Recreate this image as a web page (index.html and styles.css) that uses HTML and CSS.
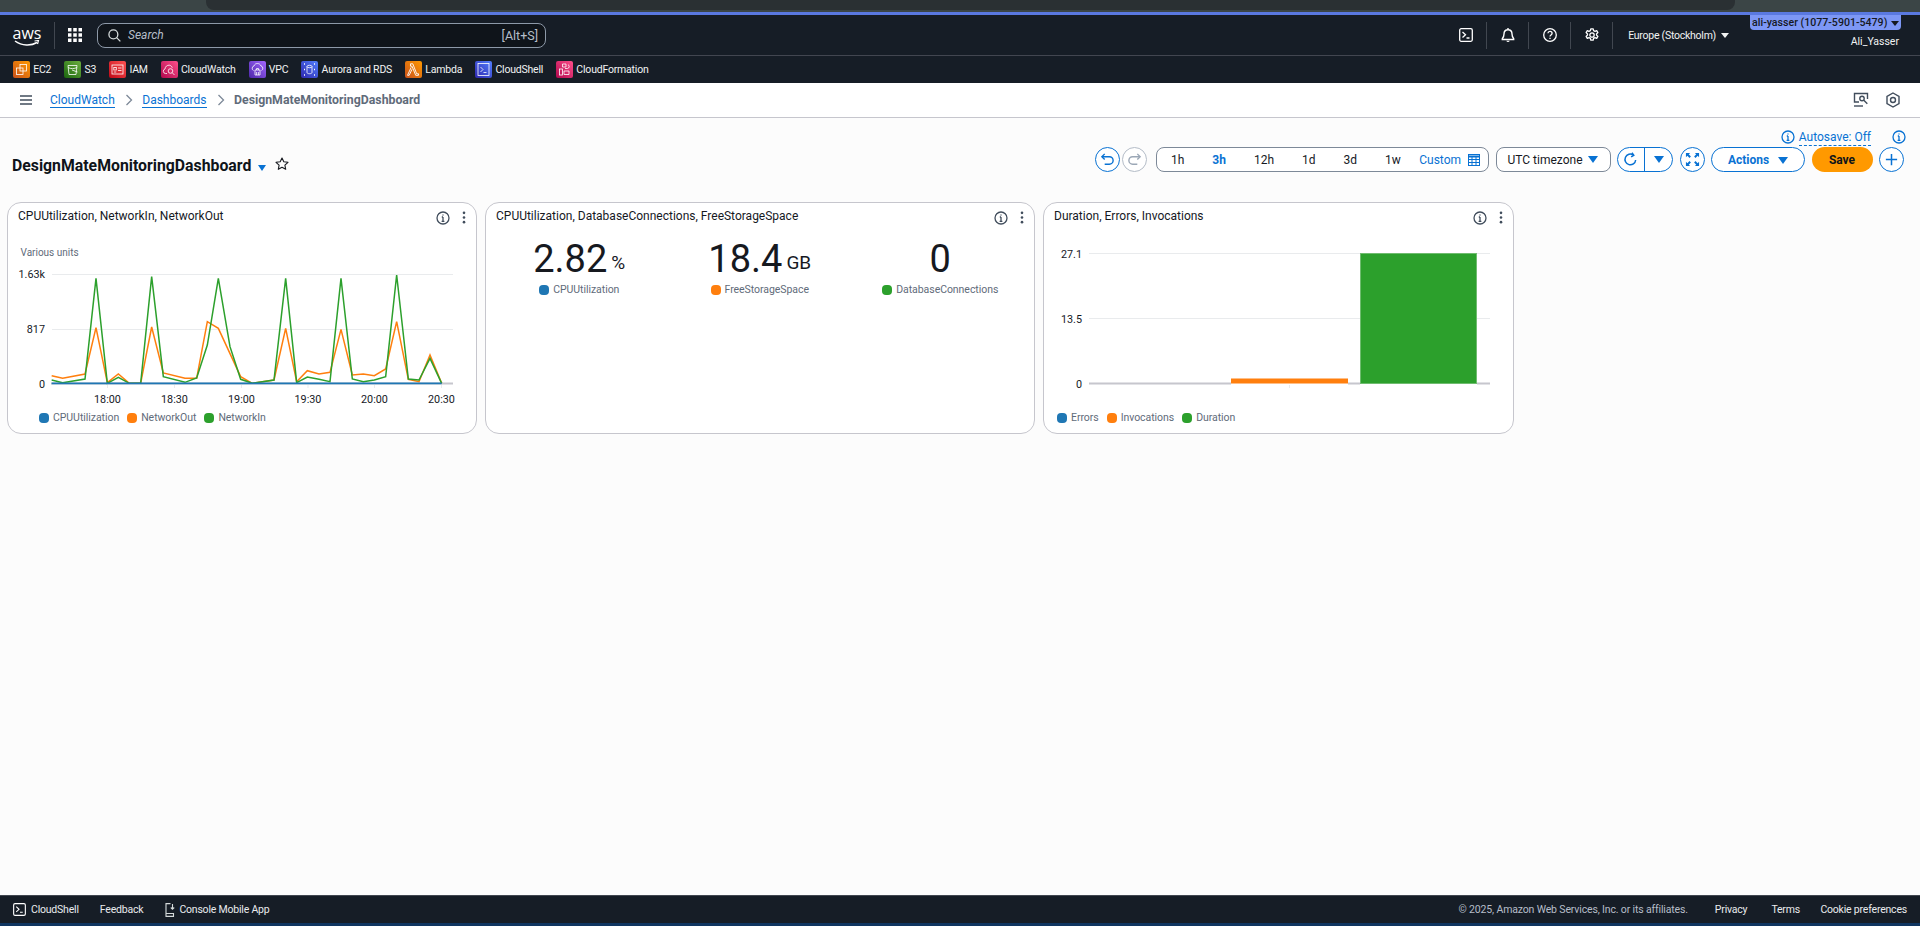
FILE: index.html
```html
<!DOCTYPE html>
<html lang="en">
<head>
    <meta charset="UTF-8">
    <meta name="viewport" content="width=device-width, initial-scale=1.0">
    <title>DesignMateMonitoringDashboard | CloudWatch</title>
    <link rel="stylesheet" href="styles.css">
</head>
<body>
    <div class="browser-strip"><div class="browser-tab"></div></div>
    <div class="accent-line"></div>

    <!-- top navigation -->
    <header class="top-nav">
        <div class="aws-logo">
            <span class="aws-word">aws</span>
            <svg class="aws-smile" viewBox="0 0 26 7"><path d="M1 1c7 5 16 5 22 1.500" fill="none" stroke="#fff" stroke-width="1.500"/><path d="M20.500 1l4-.5-1 3.500" fill="none" stroke="#fff" stroke-width="1.200"/></svg>
        </div>
        <span class="nav-divider divider-logo"></span>
        <svg class="apps-icon" viewBox="0 0 14 14" fill="#fff"><rect width="3.500" height="3.500"/><rect x="5.250" width="3.500" height="3.500"/><rect x="10.500" width="3.500" height="3.500"/><rect y="5.250" width="3.500" height="3.500"/><rect x="5.250" y="5.250" width="3.500" height="3.500"/><rect x="10.500" y="5.250" width="3.500" height="3.500"/><rect y="10.500" width="3.500" height="3.500"/><rect x="5.250" y="10.500" width="3.500" height="3.500"/><rect x="10.500" y="10.500" width="3.500" height="3.500"/></svg>
        <div class="search-box">
            <svg class="search-icon" viewBox="0 0 14 14" fill="none" stroke="#d5dbdb" stroke-width="1.400"><circle cx="5.800" cy="5.800" r="4.800"/><path d="M9.300 9.300l4 4"/></svg>
            <span class="search-text">Search</span>
            <span class="search-key">[Alt+S]</span>
        </div>
        <div class="nav-right">
            <svg class="nav-icon" viewBox="0 0 14 14" fill="none" stroke="#fff" stroke-width="1.300"><rect x=".7" y=".7" width="12.600" height="12.600" rx="1.500"/><path d="M3.500 4l3 2.800-3 2.800M7.500 10h3"/></svg>
            <span class="nav-divider"></span>
            <svg class="nav-icon" viewBox="0 0 14 14" fill="none" stroke="#fff" stroke-width="1.400"><path d="M7 1.800c2.600 0 4 1.800 4 4.200 0 2.500.6 3.500 1.700 4.700v.8H1.300v-.8C2.400 9.500 3 8.500 3 6c0-2.400 1.400-4.200 4-4.200zM7 0v1.800"/><path d="M5.300 12.700h3.400A1.800 1.800 0 0 1 7 14a1.800 1.800 0 0 1-1.700-1.300z" fill="#fff" stroke="none"/></svg>
            <span class="nav-divider"></span>
            <svg class="nav-icon" viewBox="0 0 14 14" fill="none" stroke="#fff" stroke-width="1.300"><circle cx="7" cy="7" r="6.300"/><path d="M4.900 5.300C5 4 5.900 3.400 7 3.400c1.200 0 2.100.8 2.100 1.900 0 1.700-2.100 1.700-2.100 3.300"/><path d="M7 9.700v1.300"/></svg>
            <span class="nav-divider"></span>
            <svg class="nav-icon" viewBox="0 0 14 14" fill="none" stroke="#fff" stroke-width="1.300"><circle cx="7" cy="7" r="2.200"/><path d="M5.800.8h2.400l.4 1.800 1.400.7 1.700-.7 1.200 2-1.400 1.300v1.200l1.400 1.300-1.200 2-1.700-.7-1.400.7-.4 1.800H5.800l-.4-1.800-1.400-.7-1.700.7-1.200-2 1.400-1.300V5.900L1.100 4.600l1.200-2 1.700.7 1.400-.7z" stroke-linejoin="round"/></svg>
            <span class="nav-divider"></span>
            <span class="region">Europe (Stockholm)</span>
            <span class="caret caret-white"></span>
            <div class="account">
                <span class="account-tag">ali-yasser (1077-5901-5479) <span class="caret caret-dark"></span></span>
                <span class="account-user">Ali_Yasser</span>
            </div>
        </div>
    </header>

    <!-- pinned services -->
    <nav class="service-bar">
        <a class="service"><svg class="service-icon ic-orange" viewBox="0 0 17 17" fill="none" stroke="#fff" stroke-width=".8"><rect x="7" y="3.500" width="6.500" height="6.500"/><rect x="3.500" y="7" width="6.500" height="6.500"/></svg>EC2</a>
        <a class="service"><svg class="service-icon ic-green" viewBox="0 0 17 17" fill="none" stroke="#fff" stroke-width=".8"><path d="M4 4.500h9l-1 9H5z"/><path d="M4 6.500c3 1.500 6 1.500 9 0M8 9l5.500 2"/></svg>S3</a>
        <a class="service"><svg class="service-icon ic-red" viewBox="0 0 17 17" fill="none" stroke="#fff" stroke-width=".8"><rect x="3" y="4" width="11" height="9"/><rect x="4.800" y="6.500" width="2.500" height="2.500"/><path d="M9 7h3.500M9 9.500h3.500M4.800 11h2.500"/></svg>IAM</a>
        <a class="service"><svg class="service-icon ic-pink" viewBox="0 0 17 17" fill="none" stroke="#fff" stroke-width=".8"><path d="M6 12.500H4.500a2.300 2.300 0 0 1-.5-4.500c.2-2.500 2.200-4 4.300-3.800 1.500.2 2.500 1.200 3 2.500"/><circle cx="9.500" cy="10" r="2.300"/><path d="M11.200 11.700l2.300 2.300"/></svg>CloudWatch</a>
        <a class="service"><svg class="service-icon ic-purple" viewBox="0 0 17 17" fill="none" stroke="#fff" stroke-width=".8"><path d="M4.500 9.500A2.400 2.400 0 0 1 5 5c.5-1.800 2-2.500 3.500-2.500S11.600 3.500 12 5a2.400 2.400 0 0 1 .5 4.500"/><path d="M6 14V9h5v5zM7.500 9V7.500h2V9M7.600 14V11M9.400 14V11"/></svg>VPC</a>
        <a class="service"><svg class="service-icon ic-blue" viewBox="0 0 17 17" fill="none" stroke="#fff" stroke-width=".8"><ellipse cx="8.500" cy="5.500" rx="2.500" ry="1.200"/><path d="M6 5.500v6c0 .7 1.100 1.200 2.500 1.200s2.500-.5 2.500-1.200v-6"/><path d="M3 3h1M13 3h1M3 14h1M13 14h1M3 8.500h1M13 8.500h1" stroke-width="1.500"/></svg>Aurora and RDS</a>
        <a class="service"><svg class="service-icon ic-orange" viewBox="0 0 17 17" fill="none" stroke="#fff" stroke-width=".9"><path d="M5.500 2.800h2.300l3.900 10h1.800v1.500h-2.800L7 5.200H5.500zM7 8.300l-2.800 6h-1.700l3.700-8"/></svg>Lambda</a>
        <a class="service"><svg class="service-icon ic-blue" viewBox="0 0 17 17" fill="none" stroke="#fff" stroke-width=".8"><rect x="3" y="2.500" width="11" height="12"/><path d="M5.500 6l2.500 2.500L5.500 11M8.500 11.500h3"/></svg>CloudShell</a>
        <a class="service"><svg class="service-icon ic-pink" viewBox="0 0 17 17" fill="none" stroke="#fff" stroke-width=".8"><rect x="3.500" y="8" width="3" height="6"/><path d="M6.500 3h3.500v3h-3.500zM9 7.500h2.500a2 2 0 0 0 .5-3.800"/><path d="M8 10h5v3.500H8z"/></svg>CloudFormation</a>
    </nav>

    <!-- breadcrumbs -->
    <div class="crumbs">
        <svg class="menu-icon" viewBox="0 0 12 10" stroke="#414d5c" stroke-width="1.500"><path d="M0 1h12M0 5h12M0 9h12"/></svg>
        <a class="crumb-link">CloudWatch</a>
        <svg class="crumb-sep" viewBox="0 0 8 12" fill="none" stroke="#7d8998" stroke-width="1.300"><path d="M1.500 1l5 5-5 5"/></svg>
        <a class="crumb-link">Dashboards</a>
        <svg class="crumb-sep" viewBox="0 0 8 12" fill="none" stroke="#7d8998" stroke-width="1.300"><path d="M1.500 1l5 5-5 5"/></svg>
        <span class="crumb-current">DesignMateMonitoringDashboard</span>
        <div class="crumb-tools">
            <svg class="crumb-tool" viewBox="0 0 16 16" fill="none" stroke="#414d5c" stroke-width="1.400"><path d="M6 10H1.500V1.500h13V7"/><path d="M1 14h9"/><circle cx="9" cy="6.500" r="2.200"/><path d="M10.800 8.300l3.500 3.500"/></svg>
            <svg class="crumb-tool" viewBox="0 0 16 16" fill="none" stroke="#414d5c" stroke-width="1.400"><path d="M8 1l6 3.500v7L8 15l-6-3.500v-7z"/><circle cx="8" cy="8" r="2.500"/></svg>
        </div>
    </div>

    <main class="dash">
        <div class="autosave-row">
            <svg class="info-blue" viewBox="0 0 14 14" fill="none" stroke="#0972d3" stroke-width="1.300"><circle cx="7" cy="7" r="6"/><path d="M7 6v4.300M5.600 10.300h2.800M5.800 6H7M7 3.400v1.200"/></svg>
            <a class="autosave">Autosave: Off</a>
            <svg class="info-blue info-last" viewBox="0 0 14 14" fill="none" stroke="#0972d3" stroke-width="1.300"><circle cx="7" cy="7" r="6"/><path d="M7 6v4.300M5.600 10.300h2.800M5.800 6H7M7 3.400v1.200"/></svg>
        </div>

        <div class="toolbar">
            <div class="dash-title">
                <h1>DesignMateMonitoringDashboard</h1>
                <span class="caret caret-blue"></span>
                <svg class="star" viewBox="0 0 14 14" fill="none" stroke="#16191f" stroke-width="1.100"><path d="M7 1l1.800 3.800 4.200.5-3.100 2.900.8 4.100L7 10.300l-3.700 2 .8-4.100L1 5.300l4.200-.5z" stroke-linejoin="round"/></svg>
            </div>
            <div class="tools">
                <button class="round-btn"><svg viewBox="0 0 16 16" fill="none" stroke="#0972d3" stroke-width="1.500"><path d="M5 2L2 5l3 3"/><path d="M2.500 5H10a3.800 3.800 0 0 1 0 8H5"/></svg></button>
                <button class="round-btn round-off"><svg viewBox="0 0 16 16" fill="none" stroke="#9ba7b6" stroke-width="1.500"><path d="M11 2l3 3-3 3"/><path d="M13.500 5H6a3.800 3.800 0 0 0 0 8h5"/></svg></button>
                <div class="range-box">
                    <span class="range">1h</span>
                    <span class="range range-on">3h</span>
                    <span class="range">12h</span>
                    <span class="range">1d</span>
                    <span class="range">3d</span>
                    <span class="range">1w</span>
                    <a class="custom">Custom</a>
                    <svg class="calendar" viewBox="0 0 12 12" fill="none" stroke="#0972d3"><rect x=".5" y=".5" width="11" height="11"/><path d="M.5 2.500h11" stroke-width="2"/><path d="M4 3v8.500M8 3v8.500M.5 5.500h11M.5 8.500h11"/></svg>
                </div>
                <div class="tz-select">UTC timezone <span class="caret caret-blue caret-big"></span></div>
                <div class="split-btn">
                    <span class="split-main"><svg viewBox="0 0 16 16" fill="none" stroke="#0972d3" stroke-width="1.600"><path d="M13.500 8.500A5.700 5.700 0 1 1 11 3.200"/><path d="M9.500.8l2 2.600-2.800 1.800"/></svg></span>
                    <span class="split-caret"><span class="caret caret-blue caret-big"></span></span>
                </div>
                <button class="round-btn"><svg viewBox="0 0 16 16" fill="#0972d3"><path d="M1 1h4.500L4 2.500 6.300 4.800 4.800 6.300 2.500 4 1 5.500zM15 1v4.500L13.500 4l-2.300 2.300-1.500-1.500L12 2.500 10.500 1zM1 15v-4.500L2.500 12l2.300-2.300 1.500 1.500L4 13.500 5.500 15zM15 15h-4.500l1.500-1.500-2.300-2.300 1.500-1.500 2.300 2.300 1.500-1.500z"/></svg></button>
                <button class="pill-btn">Actions <span class="caret caret-blue caret-big"></span></button>
                <button class="save-btn">Save</button>
                <button class="round-btn"><svg viewBox="0 0 16 16" stroke="#0972d3" stroke-width="1.600"><path d="M8 2v12M2 8h12"/></svg></button>
            </div>
        </div>

        <section class="cards">
            <article class="card">
                <div class="card-head">
                    <h2>CPUUtilization, NetworkIn, NetworkOut</h2>
                    <svg class="card-info" viewBox="0 0 14 14" fill="none" stroke="#414d5c" stroke-width="1.300"><circle cx="7" cy="7" r="6"/><path d="M7 6v4.300M5.600 10.300h2.800M5.800 6H7M7 3.400v1.200"/></svg>
                    <svg class="card-more" viewBox="0 0 4 14" fill="#414d5c"><circle cx="2" cy="2" r="1.400"/><circle cx="2" cy="7" r="1.400"/><circle cx="2" cy="12" r="1.400"/></svg>
                </div>
                <svg class="chart" width="468" height="170" viewBox="8 236 468 170">
                    <text class="units" x="20.500" y="255.500">Various units</text>
                    <path class="grid-line" d="M52 274.500H453M52 329.500H453"/>
                    <path class="grid-line" d="M107.500 385v3M174.500 385v3M241.500 385v3M308 385v3M374.500 385v3M441.500 385v3"/>
                    <path class="axis-line" d="M51 383.500H453"/>
                    <text class="axis-y" x="45" y="277.500">1.63k</text>
                    <text class="axis-y" x="45" y="332.500">817</text>
                    <text class="axis-y" x="45" y="387.500">0</text>
                    <text class="axis-x" x="107.500" y="403">18:00</text>
                    <text class="axis-x" x="174.500" y="403">18:30</text>
                    <text class="axis-x" x="241.500" y="403">19:00</text>
                    <text class="axis-x" x="308" y="403">19:30</text>
                    <text class="axis-x" x="374.500" y="403">20:00</text>
                    <text class="axis-x" x="441.500" y="403">20:30</text>
                    <g transform="translate(0 195) scale(.33333)">
                        <polyline class="series s-orange" points="155,542 188,550 255,537 288,398 322,563 355,537 388,565 422,565 455,396 490,534 555,550 590,550 622,380 655,400 722,545 757,565 822,555 857,400 890,560 922,527 957,537 990,532 1023,403 1057,540 1090,537 1123,542 1157,522 1190,380 1225,553 1257,560 1290,480 1325,565"/>
                        <polyline class="series s-green" points="155,555 188,563 255,552 288,250 322,565 355,547 388,565 422,565 455,245 490,545 555,562 590,549 622,450 655,250 690,455 722,553 757,565 822,555 857,250 890,563 922,546 957,553 990,560 1023,250 1057,552 1090,560 1123,555 1157,545 1190,240 1225,552 1257,555 1290,490 1325,565"/>
                        <polyline class="series s-blue" points="155,565 1325,565"/>
                    </g>
                </svg>
                <div class="legend legend-cpu">
                    <span class="legend-item"><i class="dot dot-blue"></i>CPUUtilization</span>
                    <span class="legend-item"><i class="dot dot-orange"></i>NetworkOut</span>
                    <span class="legend-item"><i class="dot dot-green"></i>NetworkIn</span>
                </div>
            </article>

            <article class="card">
                <div class="card-head">
                    <h2>CPUUtilization, DatabaseConnections, FreeStorageSpace</h2>
                    <svg class="card-info" viewBox="0 0 14 14" fill="none" stroke="#414d5c" stroke-width="1.300"><circle cx="7" cy="7" r="6"/><path d="M7 6v4.300M5.600 10.300h2.800M5.800 6H7M7 3.400v1.200"/></svg>
                    <svg class="card-more" viewBox="0 0 4 14" fill="#414d5c"><circle cx="2" cy="2" r="1.400"/><circle cx="2" cy="7" r="1.400"/><circle cx="2" cy="12" r="1.400"/></svg>
                </div>
                <div class="metrics">
                    <div class="metric">
                        <div class="metric-value">2.82<small>%</small></div>
                        <span class="legend-item"><i class="dot dot-blue"></i>CPUUtilization</span>
                    </div>
                    <div class="metric">
                        <div class="metric-value">18.4<small>GB</small></div>
                        <span class="legend-item"><i class="dot dot-orange"></i>FreeStorageSpace</span>
                    </div>
                    <div class="metric">
                        <div class="metric-value">0</div>
                        <span class="legend-item"><i class="dot dot-green"></i>DatabaseConnections</span>
                    </div>
                </div>
            </article>

            <article class="card">
                <div class="card-head">
                    <h2>Duration, Errors, Invocations</h2>
                    <svg class="card-info" viewBox="0 0 14 14" fill="none" stroke="#414d5c" stroke-width="1.300"><circle cx="7" cy="7" r="6"/><path d="M7 6v4.300M5.600 10.300h2.800M5.800 6H7M7 3.400v1.200"/></svg>
                    <svg class="card-more" viewBox="0 0 4 14" fill="#414d5c"><circle cx="2" cy="2" r="1.400"/><circle cx="2" cy="7" r="1.400"/><circle cx="2" cy="12" r="1.400"/></svg>
                </div>
                <svg class="chart" width="469" height="170" viewBox="1044 236 469 170">
                    <path class="grid-line" d="M1089 253.500H1490M1089 318.500H1490M1289.500 385v3"/>
                    <rect class="bar-orange" x="1231" y="378.500" width="117" height="5"/>
                    <rect class="bar-green" x="1360.500" y="253.500" width="116" height="130"/>
                    <path class="axis-line" d="M1089 383.500H1231M1348 383.500H1360M1477 383.500H1490"/>
                    <text class="axis-y" x="1082" y="257.500">27.1</text>
                    <text class="axis-y" x="1082" y="322.500">13.5</text>
                    <text class="axis-y" x="1082" y="387.500">0</text>
                </svg>
                <div class="legend legend-lambda">
                    <span class="legend-item"><i class="dot dot-blue"></i>Errors</span>
                    <span class="legend-item"><i class="dot dot-orange"></i>Invocations</span>
                    <span class="legend-item"><i class="dot dot-green"></i>Duration</span>
                </div>
            </article>
        </section>
    </main>

    <footer class="footer">
        <svg class="foot-icon" viewBox="0 0 14 14" fill="none" stroke="#fff" stroke-width="1.200"><rect x=".7" y=".7" width="12.600" height="12.600" rx="1.500"/><path d="M3.500 4l3 2.800-3 2.800M7.500 10h3"/></svg>
        <a class="foot-link foot-shell">CloudShell</a>
        <a class="foot-link foot-feedback">Feedback</a>
        <svg class="foot-phone" viewBox="0 0 11 14" fill="none" stroke="#d5dbdb" stroke-width="1.100"><path d="M5.500.6H1v12.800h7.500V10M1 10.500h7.500M7.500 1v5M5.800 4.500l1.700 1.800 1.700-1.800"/></svg>
        <a class="foot-link">Console Mobile App</a>
        <span class="copyright">© 2025, Amazon Web Services, Inc. or its affiliates.</span>
        <a class="foot-link foot-privacy">Privacy</a>
        <a class="foot-link foot-terms">Terms</a>
        <a class="foot-link foot-cookie">Cookie preferences</a>
    </footer>
    <div class="bottom-line"></div>
</body>
</html>
```

FILE: styles.css
```css
* {
    box-sizing: border-box;
}

body {
    margin: 0;
    height: 926px;
    overflow: hidden;
    display: flex;
    flex-direction: column;
    font-family: Roboto, "Noto Sans", Arial, sans-serif;
    font-size: 12px;
    color: #16191f;
    background-color: #fcfcfc;
}

a {
    text-decoration: none;
}

svg {
    display: block;
    flex: none;
}

/* browser chrome remains at the top */
.browser-strip {
    height: 12px;
    flex: none;
    padding: 0 185px 0 206px;
    background-color: #3b4546;
}

.browser-tab {
    height: 10px;
    background-color: #2a3033;
    border-radius: 0 0 8px 8px;
}

.accent-line {
    height: 3px;
    flex: none;
    background-color: #5a79e0;
}

/* top nav */
.top-nav {
    height: 41px;
    flex: none;
    display: flex;
    align-items: center;
    padding-left: 14px;
    background-color: #161d26;
    border-bottom: 1px solid #424650;
    color: #fff;
}

.aws-logo {
    width: 26px;
    display: flex;
    flex-direction: column;
    align-items: center;
    margin-top: 3px;
}

.aws-word {
    font-family: "Open Sans", sans-serif;
    font-size: 16px;
    line-height: 12px;
    color: #fff;
}

.aws-smile {
    width: 26px;
    height: 7px;
    margin-top: 1px;
}

.nav-divider {
    width: 1px;
    height: 27px;
    background-color: #414750;
    flex: none;
}

.divider-logo {
    margin-left: 14px;
    margin-right: 13px;
}

.apps-icon {
    width: 14px;
    height: 14px;
    margin-right: 15px;
}

.search-box {
    width: 449px;
    height: 25px;
    display: flex;
    align-items: center;
    padding: 0 7px 0 10px;
    background-color: #0f141a;
    border: 1px solid #8d99a8;
    border-radius: 8px;
}

.search-icon {
    width: 13px;
    height: 13px;
    margin-right: 7px;
}

.search-text {
    font-style: italic;
    font-size: 12px;
    color: #b6bec9;
}

.search-key {
    margin-left: auto;
    font-size: 12.500px;
    color: #b6bec9;
}

.nav-right {
    margin-left: auto;
    display: flex;
    align-items: center;
    height: 100%;
}

.nav-icon {
    width: 14px;
    height: 14px;
    margin: 0 13.500px;
}

.region {
    margin-left: 15px;
    font-size: 10.500px;
    letter-spacing: -.25px;
    color: #f2f3f3;
    white-space: nowrap;
}

.caret {
    display: inline-block;
    width: 0;
    height: 0;
    flex: none;
    border-style: solid;
    border-color: transparent;
    border-width: 5px 4px 0;
}

.caret-white {
    border-top-color: #f2f3f3;
    margin-left: 5px;
}

.caret-dark {
    border-top-color: #16191f;
    margin-left: 1px;
}

.caret-blue {
    border-top-color: #0972d3;
}

.caret-big {
    border-width: 7px 5px 0;
}

.account {
    width: 151px;
    flex: none;
    height: 100%;
    margin: 0 19px 0 21px;
    display: flex;
    flex-direction: column;
    align-items: stretch;
}

.account-tag {
    height: 15px;
    line-height: 15px;
    text-align: center;
    font-size: 10.600px;
    font-weight: 500;
    color: #16191f;
    background-color: #7d97f5;
    border-radius: 0 0 4px 4px;
    white-space: nowrap;
}

.account-user {
    margin-top: 5px;
    padding-right: 2px;
    text-align: right;
    font-size: 10.500px;
    color: #f2f3f3;
}

/* pinned services */
.service-bar {
    height: 27px;
    flex: none;
    display: flex;
    align-items: center;
    gap: 13px;
    padding-left: 13px;
    background-color: #161d26;
}

.service {
    display: flex;
    align-items: center;
    gap: 3.200px;
    font-size: 10.500px;
    letter-spacing: -.2px;
    color: #f2f3f3;
    white-space: nowrap;
}

.service-icon {
    width: 17px;
    height: 17px;
    border-radius: 2px;
}

.ic-orange {
    background: linear-gradient(45deg, #c8511b, #ff9900);
}

.ic-green {
    background: linear-gradient(45deg, #1b660f, #6cae3e);
}

.ic-red {
    background: linear-gradient(45deg, #bd0816, #ff5252);
}

.ic-pink {
    background: linear-gradient(45deg, #b0084d, #ff4f8b);
}

.ic-purple {
    background: linear-gradient(45deg, #4d27a8, #a166ff);
}

.ic-blue {
    background: linear-gradient(45deg, #2e27ad, #527fff);
}

/* breadcrumbs */
.crumbs {
    height: 35px;
    flex: none;
    display: flex;
    align-items: center;
    padding: 0 19px 0 20px;
    background-color: #fff;
    border-bottom: 1px solid #c6c6cd;
}

.menu-icon {
    width: 12px;
    height: 10px;
    margin-right: 18px;
}

.crumb-link {
    font-size: 12px;
    color: #0972d3;
    border-bottom: 1px solid #0972d3;
}

.crumb-sep {
    width: 8px;
    height: 12px;
    margin: 0 9.500px 0 10px;
}

.crumb-current {
    font-size: 12.300px;
    font-weight: 700;
    color: #5f6b7a;
}

.crumb-tools {
    margin-left: auto;
    display: flex;
    gap: 16px;
}

.crumb-tool {
    width: 16px;
    height: 16px;
}

/* dashboard */
.dash {
    flex: 1;
    padding-top: 9px;
}

.autosave-row {
    height: 20px;
    display: flex;
    align-items: center;
    padding-right: 14px;
    justify-content: flex-end;
}

.info-blue {
    width: 14px;
    height: 14px;
}

.info-last {
    margin-left: 21px;
}

.autosave {
    margin-left: 4px;
    font-size: 12px;
    line-height: 16px;
    color: #0972d3;
    border-bottom: 1px dashed #0972d3;
}

.toolbar {
    height: 25px;
    margin-bottom: 30px;
    padding: 0 16px 0 12px;
    display: flex;
    justify-content: space-between;
}

.dash-title {
    display: flex;
    align-items: center;
    margin-top: 12px;
}

.dash-title h1 {
    margin: 0;
    font-size: 15.800px;
    font-weight: 700;
    color: #0f141a;
}

.dash-title .caret {
    margin: 4px 9px 0 7px;
    border-width: 6px 4.500px 0;
}

.star {
    width: 14px;
    height: 14px;
    margin-top: -3px;
}

.tools {
    display: flex;
    gap: 6.500px;
}

.round-btn {
    width: 25px;
    height: 25px;
    padding: 4px;
    background-color: #fff;
    border: 1px solid #0972d3;
    border-radius: 50%;
}

.round-btn svg {
    width: 15px;
    height: 15px;
}

.round-off {
    border-color: #b4bcc7;
    margin-left: -4.500px;
}

.range-box {
    width: 333px;
    height: 25px;
    margin-left: 2.500px;
    display: flex;
    align-items: center;
    background-color: #fff;
    border: 1px solid #7d8998;
    border-radius: 8px;
    font-size: 12px;
}

.range {
    padding: 0 14px;
}

.range-on {
    font-weight: 700;
    color: #0972d3;
}

.custom {
    margin-left: auto;
    color: #0972d3;
}

.calendar {
    width: 12px;
    height: 12px;
    margin: 0 8px 0 7px;
}

.tz-select {
    width: 115px;
    height: 25px;
    display: flex;
    align-items: center;
    justify-content: space-between;
    padding: 0 12px 0 11px;
    background-color: #fff;
    border: 1px solid #7d8998;
    border-radius: 8px;
    font-size: 12px;
    white-space: nowrap;
}

.split-btn {
    width: 56px;
    height: 25px;
    display: flex;
    background-color: #fff;
    border: 1px solid #0972d3;
    border-radius: 13px;
}

.split-main {
    width: 27px;
    padding: 4px 0 0 5px;
    border-right: 1px solid #0972d3;
}

.split-main svg {
    width: 15px;
    height: 15px;
}

.split-caret {
    flex: 1;
    display: flex;
    align-items: center;
    justify-content: center;
}

.pill-btn {
    width: 94px;
    height: 25px;
    font: 700 12px Roboto, sans-serif;
    color: #0972d3;
    background-color: #fff;
    border: 1px solid #0972d3;
    border-radius: 13px;
}

.pill-btn .caret {
    margin-left: 6px;
}

.save-btn {
    width: 61px;
    height: 25px;
    font: 700 12px Roboto, sans-serif;
    color: #0f141a;
    background-color: #ff9900;
    border: none;
    border-radius: 13px;
}

/* widgets */
.cards {
    display: grid;
    grid-template-columns: 470px 550px 471px;
    gap: 8px;
    padding-left: 7px;
}

.card {
    height: 232px;
    background-color: #fff;
    border: 1px solid #c6c6cd;
    border-radius: 14px;
    overflow: hidden;
}

.card-head {
    height: 33px;
    display: flex;
    align-items: center;
    padding: 0 10px 4px 10px;
}

.card-head h2 {
    margin: 0 auto 4px 0;
    font-size: 12px;
    font-weight: 400;
    color: #16191f;
}

.card-info {
    width: 14px;
    height: 14px;
}

.card-more {
    width: 4px;
    height: 13px;
    margin-left: 12px;
}

.units {
    font-size: 10px;
    fill: #5f6b7a;
}

.axis-y {
    font-size: 10.800px;
    fill: #16191f;
    text-anchor: end;
}

.axis-x {
    font-size: 10.800px;
    fill: #16191f;
    text-anchor: middle;
}

.grid-line {
    fill: none;
    stroke: #e9ebed;
}

.axis-line {
    fill: none;
    stroke: #c6c6cd;
    stroke-width: 2;
}

.series {
    fill: none;
    stroke-width: 4.500;
}

.s-blue {
    stroke: #1f77b4;
    stroke-width: 5;
}

.s-orange {
    stroke: #ff7f0e;
}

.s-green {
    stroke: #2ca02c;
}

.bar-orange {
    fill: #ff7f0e;
}

.bar-green {
    fill: #2ca02c;
    stroke: #6fbc6f;
}

.legend {
    height: 23px;
    display: flex;
    align-items: center;
    gap: 8px;
}

.legend-cpu {
    padding-left: 31px;
}

.legend-lambda {
    padding-left: 13px;
}

.legend-item {
    display: inline-flex;
    align-items: center;
    gap: 4px;
    font-size: 10.500px;
    letter-spacing: -.05px;
    color: #5f6b7a;
    white-space: nowrap;
}

.dot {
    width: 10px;
    height: 10px;
    border-radius: 4px;
}

.dot-blue {
    background-color: #1f77b4;
}

.dot-orange {
    background-color: #ff7f0e;
}

.dot-green {
    background-color: #2ca02c;
}

.metrics {
    display: grid;
    grid-template-columns: repeat(3, 180.500px);
    padding: 1px 0 0 3px;
}

.metric {
    display: flex;
    flex-direction: column;
    align-items: center;
}

.metric-value {
    height: 44px;
    font-size: 38px;
    line-height: 44px;
    color: #16191f;
    white-space: nowrap;
}

.metric-value small {
    margin-left: 4px;
    font-size: 19px;
    vertical-align: 3px;
}

.metric .legend-item {
    margin-top: 2px;
}

/* footer */
.footer {
    height: 28px;
    flex: none;
    display: flex;
    align-items: center;
    padding: 0 13px;
    background-color: #161d26;
    border-top: 1px solid #414750;
}

.foot-link {
    font-size: 10.500px;
    letter-spacing: -.2px;
    color: #e9ebed;
    white-space: nowrap;
}

.foot-icon {
    width: 13px;
    height: 13px;
}

.foot-shell {
    margin-left: 5px;
}

.foot-feedback {
    margin-left: 21px;
}

.foot-phone {
    width: 11px;
    height: 14px;
    margin: 0 3px 0 22px;
}

.copyright {
    margin-left: auto;
    font-size: 10.500px;
    letter-spacing: -.15px;
    color: #b6bec9;
}

.foot-privacy {
    margin-left: 27px;
}

.foot-terms {
    margin-left: 24px;
}

.foot-cookie {
    margin-left: 20.500px;
}

.bottom-line {
    height: 3px;
    flex: none;
    background-color: #0f3560;
}
```
